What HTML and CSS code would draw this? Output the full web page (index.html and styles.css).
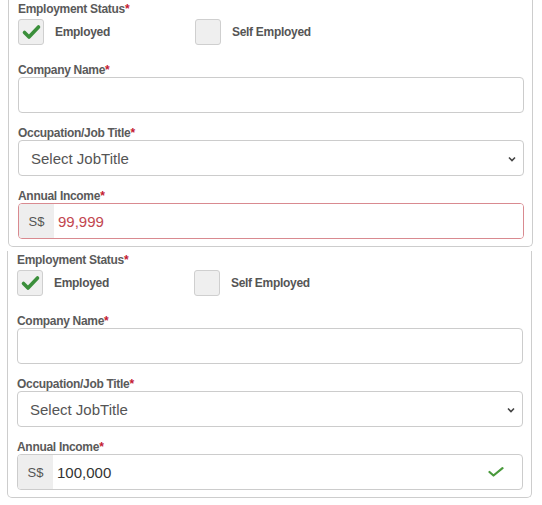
FILE: index.html
```html
<html>
<head>
<title>Employment details</title>
<link rel="stylesheet" href="styles.css">
</head>
<body>

<div class="panel">
	<div class="field status">
		<label class="lbl">Employment Status<span class="req">*</span></label>
		<div class="choices">
			<span class="choice first"><span class="box"><svg width="26" height="26" viewBox="0 0 26 26"><path d="M6.5 13.5 L11 18 L20.5 8" fill="none" stroke="#3b8f3b" stroke-width="3.6" stroke-linecap="round" stroke-linejoin="round"/></svg></span>Employed</span>
			<span class="choice"><span class="box"></span>Self Employed</span>
		</div>
	</div>
	<div class="field">
		<label class="lbl">Company Name<span class="req">*</span></label>
		<input type="text" class="txt" value="">
	</div>
	<div class="field">
		<label class="lbl">Occupation/Job Title<span class="req">*</span></label>
		<div class="select"><span>Select JobTitle</span><svg width="8" height="6" viewBox="0 0 8 6"><path d="M1 1.5 L4 4.5 L7 1.5" fill="none" stroke="#444" stroke-width="1.6"/></svg></div>
	</div>
	<div class="field">
		<label class="lbl">Annual Income<span class="req">*</span></label>
		<div class="group invalid">
			<span class="addon">S$</span>
			<input type="text" class="val" value="99,999">
		</div>
	</div>
</div>

<div class="panel second">
	<div class="field status">
		<label class="lbl">Employment Status<span class="req">*</span></label>
		<div class="choices">
			<span class="choice first"><span class="box"><svg width="26" height="26" viewBox="0 0 26 26"><path d="M6.5 13.5 L11 18 L20.5 8" fill="none" stroke="#3b8f3b" stroke-width="3.6" stroke-linecap="round" stroke-linejoin="round"/></svg></span>Employed</span>
			<span class="choice"><span class="box"></span>Self Employed</span>
		</div>
	</div>
	<div class="field">
		<label class="lbl">Company Name<span class="req">*</span></label>
		<input type="text" class="txt" value="">
	</div>
	<div class="field">
		<label class="lbl">Occupation/Job Title<span class="req">*</span></label>
		<div class="select"><span>Select JobTitle</span><svg width="8" height="6" viewBox="0 0 8 6"><path d="M1 1.5 L4 4.5 L7 1.5" fill="none" stroke="#444" stroke-width="1.6"/></svg></div>
	</div>
	<div class="field">
		<label class="lbl">Annual Income<span class="req">*</span></label>
		<div class="group valid">
			<span class="addon">S$</span>
			<input type="text" class="val" value="100,000">
			<svg class="ok" width="16" height="10" viewBox="0 0 16 10"><path d="M1.5 5 L5.5 8.5 L14.5 1.2" fill="none" stroke="#4a9a3c" stroke-width="2.2" stroke-linecap="round" stroke-linejoin="round"/></svg>
		</div>
	</div>
</div>

</body>
</html>
```

FILE: styles.css
```css
body {
  margin: 0;
  background: #fff;
  font-family: "Liberation Sans", Arial, sans-serif;
}

.panel {
  width: 506px;
  margin-left: 8px;
  padding: 2px 8px 7px 9px;
  border: 1px solid #cdcdcd;
  border-top: none;
  border-radius: 0 0 5px 5px;
}
.second {
  margin-top: 4px;
  margin-left: 7px;
}

.field {
  margin-bottom: 13px;
}
.field:last-child {
  margin-bottom: 0;
}
.status {
  margin-bottom: 18px;
}

.lbl {
  display: block;
  font-size: 12px;
  font-weight: bold;
  line-height: 14px;
  letter-spacing: -0.3px;
  color: #5a5a5a;
}
.req {
  color: #c41a32;
}

.choices {
  display: flex;
  align-items: center;
  margin-top: 3px;
}
.choice {
  display: flex;
  align-items: center;
  gap: 11px;
  font-size: 12px;
  font-weight: bold;
  letter-spacing: -0.3px;
  color: #555;
}
.choice.first {
  width: 177px;
}
.box {
  display: block;
  width: 24px;
  height: 24px;
  background: #efefef;
  border: 1px solid #cfcfcf;
  border-radius: 3px;
}
.box svg {
  display: block;
  margin: -1px;
}

.txt {
  display: block;
  width: 100%;
  height: 36px;
  margin: 0;
  border: 1px solid #cccccc;
  border-radius: 4px;
  font-family: "Liberation Sans", Arial, sans-serif;
  font-size: 15px;
  padding: 0 12px;
  box-sizing: border-box;
  outline: none;
}

.select {
  display: flex;
  align-items: center;
  justify-content: space-between;
  height: 36px;
  border: 1px solid #cccccc;
  border-radius: 4px;
  box-sizing: border-box;
  padding: 0 7px 0 12px;
  font-size: 15px;
  color: #555;
}
.select svg {
  margin-top: 1px;
}

.group {
  display: flex;
  align-items: center;
  height: 36px;
  border: 1px solid #cccccc;
  border-radius: 4px;
  box-sizing: border-box;
  overflow: hidden;
}
.group.invalid {
  border-color: #d98a90;
}
.addon {
  display: flex;
  align-items: center;
  justify-content: center;
  width: 35px;
  height: 100%;
  background: #eeeeee;
  font-size: 13px;
  color: #555;
}
.val {
  flex: 1;
  min-width: 0;
  height: 100%;
  border: none;
  outline: none;
  padding: 0 4px;
  font-family: "Liberation Sans", Arial, sans-serif;
  font-size: 15px;
  color: #333;
  background: #fff;
}
.invalid .val {
  color: #c2464f;
}
.ok {
  margin-right: 18px;
}
```
